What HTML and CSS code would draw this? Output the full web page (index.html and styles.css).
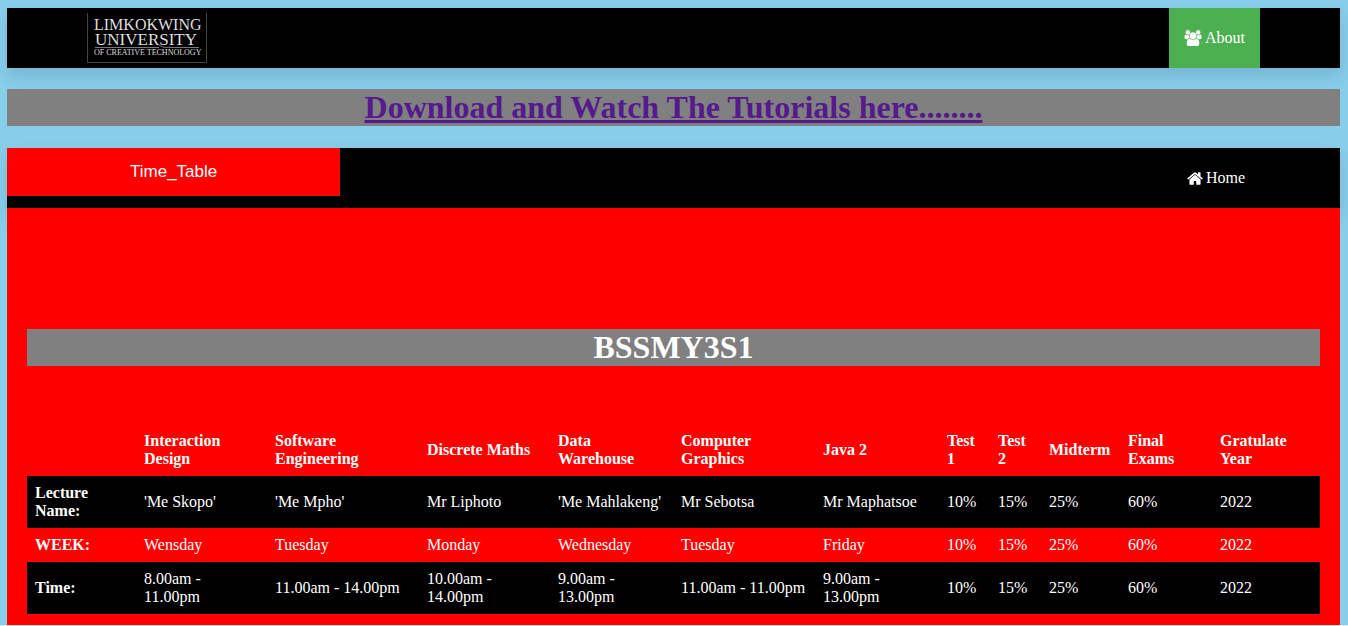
FILE: index.html
```html
<!DOCTYPE html>
<html lang="en">
<head>
<meta charset="utf-8">
<title>Time Table</title>
<link rel="stylesheet" href="styles.css">
</head>
<body>
<header class="navbar">
  <svg class="logo" viewBox="0 0 120 50" role="img" aria-label="Limkokwing University of Creative Technology">
    <path class="logo-frame" d="M.5 0V49.500H119.500V0"/>
    <text class="logo-text" x="7" y="17" font-size="16">LIMKOKWING</text>
    <text class="logo-text" x="8" y="32" font-size="17">UNIVERSITY</text>
    <path class="logo-rule" d="M8 34.500H72M82 34.500H112M70 30Q75 36 83 34"/>
    <text class="logo-text" x="7" y="42" font-size="8">OF CREATIVE TECHNOLOGY</text>
  </svg>
  <a class="nav-link active" href="#about">
    <svg class="icon-users" viewBox="0 0 1920 1792" aria-hidden="true"><path d="M593 896q-162 5-265 128H194q-82 0-138-40.500T0 865q0-353 124-353 6 0 43.500 21t97.500 42.500T384 597q67 0 133-23-5 37-5 66 0 139 81 256zm1071 637q0 120-73 189.500t-194 69.500H523q-121 0-194-69.500T256 1533q0-53 3.500-103.500t14-109T300 1212t43-97.500 62-81 85.500-53.500T602 960q10 0 43 21.500t73 48 107 48 135 21.500 135-21.500 107-48 73-48 43-21.500q61 0 111.500 20t85.500 53.500 62 81 43 97.500 26.500 108.500 14 109 3.500 103.500zM640 256q0 106-75 181t-181 75-181-75-75-181 75-181T384 0t181 75 75 181zm704 384q0 159-112.500 271.500T960 1024 688.500 911.500 576 640t112.500-271.500T960 256t271.500 112.500T1344 640zm576 225q0 78-56 118.500t-138 40.500h-134q-103-123-265-128 81-117 81-256 0-29-5-66 66 23 133 23 59 0 119-21.500t97.500-42.500 43.500-21q124 0 124 353zm-128-609q0 106-75 181t-181 75-181-75-75-181 75-181 181-75 181 75 75 181z"/></svg>
    About
  </a>
</header>

<h1 class="banner"><a href="#tutorials">Download and Watch The Tutorials here........</a></h1>

<nav class="navbar tabs">
  <button class="tab" type="button">Time_Table</button>
  <a class="nav-link" href="#home">
    <svg class="icon-home" viewBox="0 125 1664 1283" aria-hidden="true"><path d="M1408 864v480q0 26-19 45t-45 19H960v-384H704v384H320q-26 0-45-19t-19-45V864q0-1 .5-3t.5-3l575-474 575 474q1 2 1 6zm223-69l-62 74q-8 9-21 11h-3q-13 0-21-7L832 296 140 873q-12 8-24 7-13-2-21-11l-62-74q-8-10-7-23.500T37 750L756 151q32-26 76-26t76 26l244 204V160q0-14 9-23t23-9h192q14 0 23 9t9 23v408l219 182q10 8 11 21.500t-7 23.500z"/></svg>
    Home
  </a>
</nav>

<main class="content">
  <h1 class="banner">BSSMY3S1</h1>
  <table class="timetable">
    <colgroup>
      <col class="c-label"><col class="c-subject"><col class="c-wide"><col class="c-subject"><col class="c-data"><col class="c-graphics"><col class="c-java"><col class="c-test"><col class="c-test"><col class="c-mid"><col class="c-final"><col class="c-year">
    </colgroup>
    <thead>
      <tr><td></td><th scope="col">Interaction Design</th><th scope="col">Software Engineering</th><th scope="col">Discrete Maths</th><th scope="col">Data Warehouse</th><th scope="col">Computer Graphics</th><th scope="col">Java 2</th><th scope="col">Test 1</th><th scope="col">Test 2</th><th scope="col">Midterm</th><th scope="col">Final Exams</th><th scope="col">Gratulate Year</th></tr>
    </thead>
    <tbody>
      <tr><th scope="row">Lecture Name:</th><td>'Me Skopo'</td><td>'Me Mpho'</td><td>Mr Liphoto</td><td>'Me Mahlakeng'</td><td>Mr Sebotsa</td><td>Mr Maphatsoe</td><td>10%</td><td>15%</td><td>25%</td><td>60%</td><td>2022</td></tr>
      <tr><th scope="row">WEEK:</th><td>Wensday</td><td>Tuesday</td><td>Monday</td><td>Wednesday</td><td>Tuesday</td><td>Friday</td><td>10%</td><td>15%</td><td>25%</td><td>60%</td><td>2022</td></tr>
      <tr><th scope="row">Time:</th><td>8.00am - 11.00pm</td><td>11.00am - 14.00pm</td><td>10.00am - 14.00pm</td><td>9.00am - 13.00pm</td><td>11.00am - 11.00pm</td><td>9.00am - 13.00pm</td><td>10%</td><td>15%</td><td>25%</td><td>60%</td><td>2022</td></tr>
    </tbody>
  </table>
</main>
</body>
</html>
```

FILE: styles.css
```css
* { box-sizing: border-box; }

html { background: #e8e8e8; }

body {
  margin: 0;
  padding: 8px 8px 0 7px;
  background: skyblue;
  color: white;
  font: 16px/18px "Liberation Serif", "Times New Roman", serif;
}

.navbar {
  display: flex;
  align-items: center;
  justify-content: space-between;
  height: 60px;
  padding-left: 80px;
  background: black;
  box-shadow: 0 8px 16px rgba(0, 0, 0, 0.12);
}

.logo { width: 120px; height: 50px; }
.logo-frame { fill: none; stroke: #444; }
.logo-rule { fill: none; stroke: #777; }
.logo-text { fill: #ddd; font-family: "Liberation Serif", serif; }

.nav-link {
  display: flex;
  align-items: center;
  gap: 3px;
  height: 100%;
  margin-right: 80px;
  padding: 0 15px;
  color: white;
  text-decoration: none;
}
.nav-link.active { background: #4caf50; }
.nav-link svg { fill: white; }
.icon-users { width: 18px; height: 16px; }
.icon-home { width: 16px; height: 13px; }

.banner {
  margin: 21px 0 22px;
  background: gray;
  font-size: 32px;
  line-height: 37px;
  text-align: center;
}
.banner a { color: #551a8b; }

.tabs { padding-left: 0; }
.tab {
  align-self: flex-start;
  width: 25%;
  height: 48px;
  padding: 0 16px;
  border: 0;
  background: red;
  color: white;
  font: 17px "Liberation Sans", Arial, sans-serif;
}

.content {
  position: relative;
  display: flow-root;
  padding: 100px 20px 11px;
  background: red;
}
.content .banner { margin-bottom: 58px; }

.timetable {
  width: 100%;
  table-layout: fixed;
  border-collapse: collapse;
}
.timetable th, .timetable td { padding: 8px; text-align: left; }
.timetable tbody tr:nth-child(odd) { background: black; }

.c-label { width: 109px; }
.c-subject { width: 131px; }
.c-wide { width: 152px; }
.c-data { width: 123px; }
.c-graphics { width: 142px; }
.c-java { width: 124px; }
.c-test { width: 51px; }
.c-mid { width: 79px; }
.c-final { width: 92px; }
.c-year { width: 108px; }
```
